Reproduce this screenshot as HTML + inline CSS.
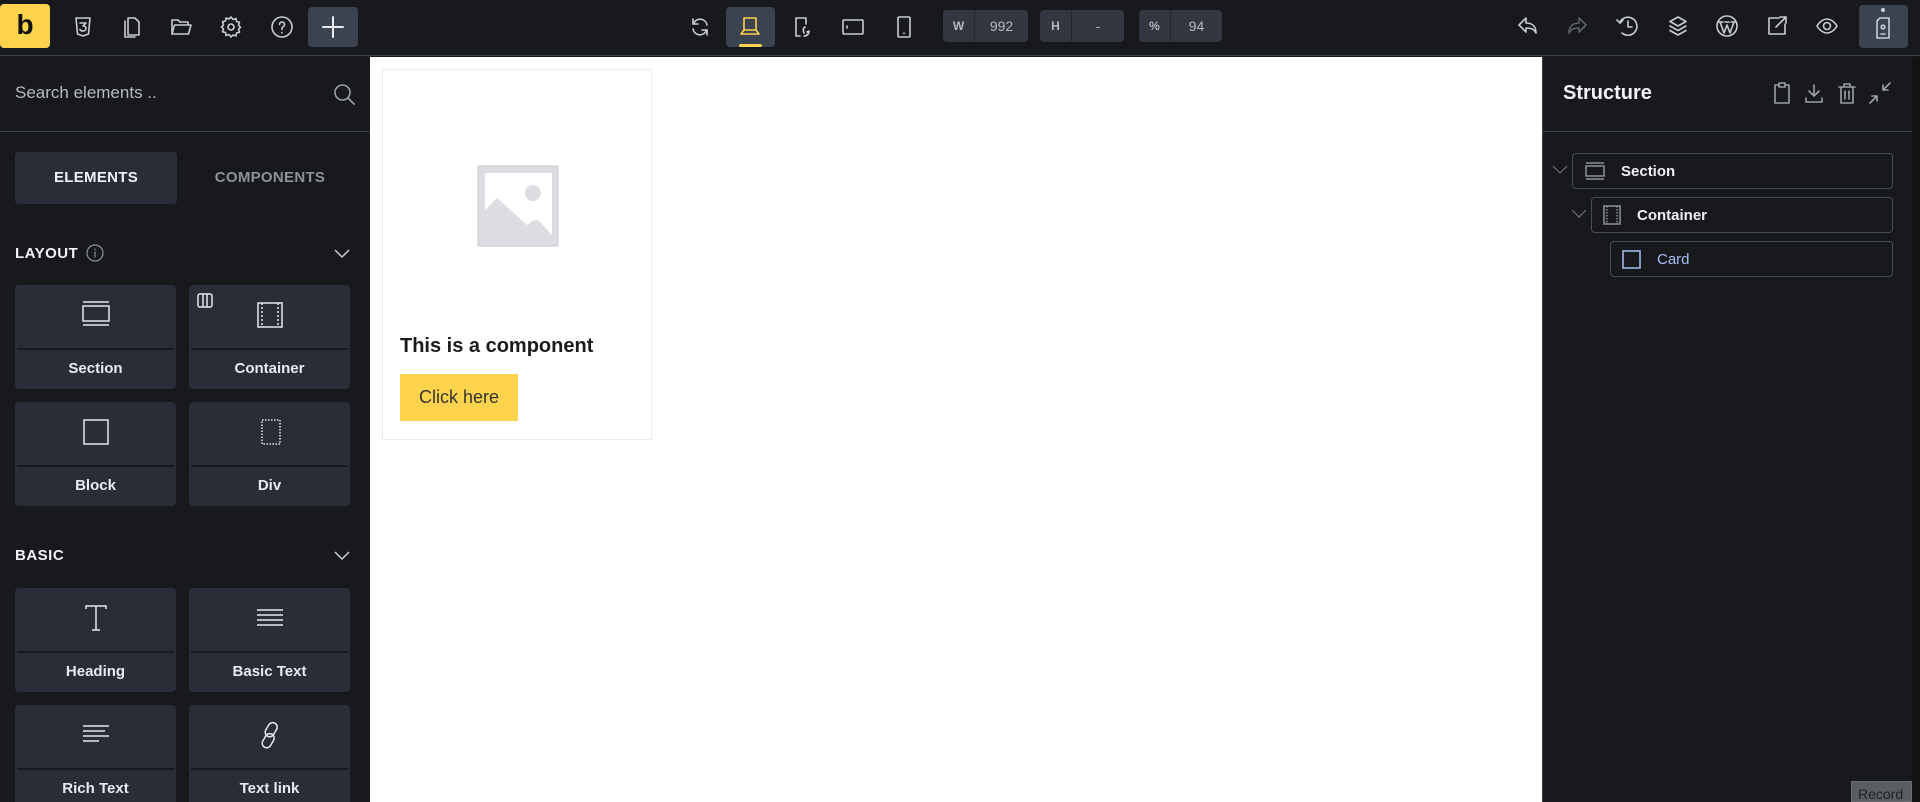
<!DOCTYPE html>
<html><head><meta charset="utf-8"><style>
*{box-sizing:border-box;margin:0;padding:0}
html,body{width:1920px;height:802px;overflow:hidden}
body{background:#17191c;font-family:"Liberation Sans",sans-serif;position:relative;color:#e6e8eb}
.abs{position:absolute}
svg{display:block}
.ic{position:absolute;stroke:#c9ccd1;fill:none;stroke-width:1.6;stroke-linecap:round;stroke-linejoin:round}
.top{left:0;top:0;width:1920px;height:56px;background:#17191c;border-bottom:1px solid #3a4048}
.box{position:absolute;top:10px;height:32px;background:#323741;border-radius:4px;font-size:14px;color:#b5b9c0;display:flex}
.box span{display:flex;align-items:center;justify-content:center}
.box .k{width:32px;border-right:1px solid #23272e;font-weight:bold;font-size:12px}
.left{left:0;top:57px;width:370px;height:745px;background:#17191c}
.card{position:absolute;width:161px;height:104px;background:#282d38;border-radius:4px}
.card .lbl{position:absolute;left:2px;right:2px;top:63px;height:41px;border-top:2px solid #17191c;text-align:center;line-height:38px;font-size:15px;font-weight:bold;color:#e8eaee}
.card svg{position:absolute;left:50%;transform:translateX(-50%);top:16px;stroke:#e6e8eb;fill:none;stroke-width:1.5}
.hd{position:absolute;left:15px;font-size:15px;font-weight:bold;letter-spacing:.5px;color:#f0f2f5}
.chev{position:absolute;stroke:#c9ccd1;fill:none;stroke-width:1.5}
.right{left:1542px;top:57px;width:370px;height:745px;background:#17191c;border-left:1px solid #3a4048}
.row{position:absolute;height:36px;border:1px solid #474c55;border-radius:4px;font-size:15px;font-weight:bold;display:flex;align-items:center;color:#eef0f3}
</style></head><body>
<div class="abs top"></div>
<div class="abs" style="left:0;top:4px;width:50px;height:44px;background:#fdd34d;border-radius:4px;color:#111;font-weight:bold;font-size:28px;text-align:center;line-height:42px">b</div>
<svg class="ic" style="left:71px;top:15px" width="24" height="24" viewBox="0 0 24 24"><path d="M5 3h14l-1.5 16L12 21l-5.5-2z"/><path d="M9 8h6l-3 3c2 0 3 1 3 2.5S13.5 16 12 16s-2.5-.5-3-1.5"/></svg>
<svg class="ic" style="left:120px;top:15px" width="24" height="24" viewBox="0 0 24 24"><path d="M8 3h7l4 4v13H8z"/><path d="M5 6v16h10"/></svg>
<svg class="ic" style="left:169px;top:15px" width="24" height="24" viewBox="0 0 24 24"><path d="M3 19V5h6l2 2h8v3"/><path d="M3 19l2.5-9H22l-2.5 9z"/></svg>
<svg class="ic" style="left:219px;top:15px" width="24" height="24" viewBox="0 0 24 24"><circle cx="12" cy="12" r="3"/><path d="M12 2l2 2.5 3-1 .5 3 3 .8-1 3 2 2-2 2 1 3-3 .7-.5 3-3-1L12 22l-2-2.5-3 1-.5-3-3-.7 1-3-2-2 2-2-1-3 3-.8.5-3 3 1z"/></svg>
<svg class="ic" style="left:270px;top:15px" width="24" height="24" viewBox="0 0 24 24"><circle cx="12" cy="12" r="10"/><path d="M9.5 9.5a2.5 2.5 0 1 1 3.5 2.3c-.7.4-1 1-1 1.7v1"/><path d="M12 17.5v.5"/></svg>
<div class="abs" style="left:308px;top:7px;width:50px;height:40px;background:#3b4250;border-radius:4px"></div>
<svg class="ic" style="left:321px;top:15px;stroke:#e8eaee;stroke-width:2" width="24" height="24" viewBox="0 0 24 24"><path d="M12 2v20M2 12h20"/></svg>
<svg class="ic" style="left:688px;top:15px" width="24" height="24" viewBox="0 0 24 24"><path d="M19 10a7 7 0 0 0-12.5-3L5 9M5 14a7 7 0 0 0 12.5 3L19 15"/><path d="M5 4v5h5M19 20v-5h-5"/></svg>
<div class="abs" style="left:726px;top:7px;width:49px;height:40px;background:#3b4250;border-radius:4px"></div>
<svg class="ic" style="left:738px;top:14px;stroke:#fdd34d" width="24" height="24" viewBox="0 0 24 24"><path d="M6 4h12v12H6zM3 20l3-4h12l3 4z"/></svg>
<div class="abs" style="left:739px;top:44px;width:23px;height:3px;background:#fdd34d;border-radius:2px"></div>
<svg class="ic" style="left:790px;top:15px" width="24" height="24" viewBox="0 0 24 24"><path d="M16 3H6v18h4M16 3v6"/><path d="M14 21c3 0 5-2 5-5l-2 1M15 12c-2 1-2 4-1 6"/></svg>
<svg class="ic" style="left:841px;top:15px" width="24" height="24" viewBox="0 0 24 24"><rect x="2" y="5" width="20" height="14" rx="1"/><path d="M6 11v2"/></svg>
<svg class="ic" style="left:892px;top:15px" width="24" height="24" viewBox="0 0 24 24"><rect x="6" y="2" width="12" height="20" rx="1"/><path d="M12 18v.5"/></svg>
<div class="box" style="left:943px;width:85px"><span class="k">W</span><span style="flex:1">992</span></div>
<div class="box" style="left:1040px;width:84px"><span class="k">H</span><span style="flex:1">-</span></div>
<div class="box" style="left:1139px;width:83px"><span class="k">%</span><span style="flex:1">94</span></div>
<svg class="ic" style="left:1516px;top:14px" width="24" height="24" viewBox="0 0 24 24"><path d="M10 4L3 11l7 7v-4c5 0 8 1 10 5 0-6-3-10-10-10z"/></svg>
<svg class="ic" style="left:1565px;top:14px;stroke:#5b6069" width="24" height="24" viewBox="0 0 24 24"><path d="M14 4l7 7-7 7v-4c-5 0-8 1-10 5 0-6 3-10 10-10z"/></svg>
<svg class="ic" style="left:1615px;top:14px" width="24" height="24" viewBox="0 0 24 24"><path d="M5 8a9 9 0 1 1 2 11"/><path d="M2 6l3 3 3-3M13 7v6h4"/></svg>
<svg class="ic" style="left:1666px;top:14px" width="24" height="24" viewBox="0 0 24 24"><path d="M12 3l8 4.5-8 4.5-8-4.5z"/><path d="M4 12l8 4.5 8-4.5M4 16.5l8 4.5 8-4.5"/></svg>
<svg class="ic" style="left:1715px;top:14px" width="24" height="24" viewBox="0 0 24 24"><circle cx="12" cy="12" r="10"/><path d="M5 8l4 11 3-8 3 8 4-11M4 8h4M10 8h4M16 8h4"/></svg>
<svg class="ic" style="left:1765px;top:14px" width="24" height="24" viewBox="0 0 24 24"><path d="M14 4H4v16h16V10"/><path d="M11 13L21 3M15 3h6v6"/></svg>
<svg class="ic" style="left:1815px;top:14px" width="24" height="24" viewBox="0 0 24 24"><path d="M2 12c3-5 7-7 10-7s7 2 10 7c-3 5-7 7-10 7s-7-2-10-7z"/><circle cx="12" cy="12" r="3.5"/></svg>
<div class="abs" style="left:1859px;top:5px;width:49px;height:43px;background:#3b4250;border-radius:4px"></div>
<svg class="ic" style="left:1871px;top:6px" width="24" height="40" viewBox="0 0 24 40"><circle cx="12" cy="4" r="1.3" fill="#c9ccd1"/><path d="M9 12h9v20H6V15z"/><circle cx="12" cy="21" r="1.8"/><path d="M10 28h4"/></svg>

<div class="abs left"></div>
<div class="abs" style="left:15px;top:83px;font-size:17px;color:#b6bac1">Search elements ..</div>
<svg class="ic" style="left:332px;top:82px;stroke:#9ca0a7" width="24" height="24" viewBox="0 0 24 24"><circle cx="10.5" cy="10.5" r="7.5"/><path d="M16 16l6 6"/></svg>
<div class="abs" style="left:0;top:131px;width:370px;height:1px;background:#3a4048"></div>
<div class="abs" style="left:15px;top:152px;width:162px;height:52px;background:#282d38;border-radius:4px;text-align:center;line-height:52px;font-size:15px;font-weight:bold;color:#f0f2f5;letter-spacing:.3px">ELEMENTS</div>
<div class="abs" style="left:189px;top:152px;width:162px;height:52px;text-align:center;line-height:52px;font-size:15px;font-weight:bold;color:#8d9199;letter-spacing:.3px">COMPONENTS</div>
<div class="hd" style="top:245px">LAYOUT</div>
<svg class="ic" style="left:86px;top:244px;stroke:#8d9199;stroke-width:1.2" width="18" height="18" viewBox="0 0 18 18"><circle cx="9" cy="9" r="8"/><path d="M9 8v5M9 5v.5"/></svg>
<svg class="chev" style="left:333px;top:248px" width="18" height="12" viewBox="0 0 18 12"><path d="M2 2l7 7 7-7"/></svg>
<div class="card" style="left:15px;top:285px"><svg width="28" height="26" viewBox="0 0 28 26"><path d="M1 1h26M1 24h26M1 5h26v15H1z"/></svg><div class="lbl">Section</div></div>
<div class="card" style="left:189px;top:285px"><svg width="28" height="28" viewBox="0 0 28 28"><rect x="2" y="2" width="24" height="24"/><path d="M6 2v24M22 2v24" stroke-dasharray="2 2"/></svg><svg style="left:8px;top:8px;transform:none" width="16" height="16" viewBox="0 0 16 16"><rect x="1" y="1" width="14" height="13" rx="2"/><path d="M6 1v13M10 1v13"/></svg><div class="lbl">Container</div></div>
<div class="card" style="left:15px;top:402px"><svg width="28" height="28" viewBox="0 0 28 28"><rect x="2" y="2" width="24" height="24"/></svg><div class="lbl">Block</div></div>
<div class="card" style="left:189px;top:402px"><svg width="28" height="28" viewBox="0 0 28 28"><rect x="6" y="2" width="18" height="24" stroke-dasharray="1.5 1.5"/></svg><div class="lbl">Div</div></div>
<div class="hd" style="top:547px">BASIC</div>
<svg class="chev" style="left:333px;top:550px" width="18" height="12" viewBox="0 0 18 12"><path d="M2 2l7 7 7-7"/></svg>
<div class="card" style="left:15px;top:588px"><svg width="28" height="28" viewBox="0 0 28 28"><path d="M4 5V2h20v3M14 2v24M10 26h8"/></svg><div class="lbl">Heading</div></div>
<div class="card" style="left:189px;top:588px"><svg width="28" height="28" viewBox="0 0 28 28"><path d="M1 6h26M1 11h26M1 16h26M1 21h26"/></svg><div class="lbl">Basic Text</div></div>
<div class="card" style="left:15px;top:705px"><svg width="28" height="28" viewBox="0 0 28 28"><path d="M1 5h26M1 10h22M1 15h26M1 20h16"/></svg><div class="lbl">Rich Text</div></div>
<div class="card" style="left:189px;top:705px"><svg width="28" height="28" viewBox="0 0 28 28"><rect x="11" y="1" width="9" height="15" rx="4.5" transform="rotate(30 15 8)"/><rect x="8" y="12" width="9" height="15" rx="4.5" transform="rotate(30 12 19)"/></svg><div class="lbl">Text link</div></div>

<div class="abs" style="left:370px;top:57px;width:1172px;height:745px;background:#fff"></div>
<div class="abs" style="left:382px;top:69px;width:270px;height:371px;border:1px solid #ececec;background:#fff"></div>
<svg class="abs" style="left:476px;top:164px" width="84" height="84" viewBox="0 0 84 84"><rect x="2" y="2" width="80" height="80" fill="#dcdde0" stroke="#c8c9cc"/><path d="M9 9h67v62L64 58c-5-5-9 1-13 3L21 34 9 46z" fill="#fff"/><circle cx="57" cy="29" r="8" fill="#dcdde0"/></svg>
<div class="abs" style="left:400px;top:335px;font-size:20px;font-weight:bold;color:#1b1b1f">This is a component</div>
<div class="abs" style="left:400px;top:374px;width:118px;height:47px;background:#fdd34d;font-size:18px;color:#333;text-align:center;line-height:47px">Click here</div>

<div class="abs right"></div>
<div class="abs" style="left:1563px;top:82px;font-size:20px;font-weight:bold;color:#f0f2f5">Structure</div>
<svg class="ic" style="left:1772px;top:82px;stroke:#9ca0a7" width="20" height="22" viewBox="0 0 20 22"><path d="M7 3H3v18h14V3h-4M7 1h6v4H7z"/></svg>
<svg class="ic" style="left:1804px;top:82px;stroke:#9ca0a7" width="20" height="22" viewBox="0 0 20 22"><path d="M10 3v11M5 9l5 5 5-5M2 16v4h16v-4"/></svg>
<svg class="ic" style="left:1837px;top:82px;stroke:#9ca0a7" width="20" height="22" viewBox="0 0 20 22"><path d="M2 5h16M7 5V2h6v3M4 5v16h12V5M8 9v8M12 9v8"/></svg>
<svg class="ic" style="left:1869px;top:82px;stroke:#9ca0a7" width="22" height="22" viewBox="0 0 22 22"><path d="M21 1l-7 7M14 3v5h5M1 21l7-7M8 19v-5H3"/></svg>
<div class="abs" style="left:1542px;top:131px;width:370px;height:1px;background:#3a4048"></div>
<svg class="chev" style="left:1552px;top:165px;stroke:#6d7179;stroke-width:1.2" width="16" height="10" viewBox="0 0 16 10"><path d="M1 1l7 7 7-7"/></svg>
<div class="row" style="left:1572px;top:153px;width:321px"><svg style="margin-left:12px;margin-right:16px;stroke:#8d9199;fill:none;stroke-width:1.5" width="20" height="18" viewBox="0 0 20 18"><path d="M1 1h18M1 17h18M1 4h18v10H1z"/></svg>Section</div>
<svg class="chev" style="left:1571px;top:209px;stroke:#6d7179;stroke-width:1.2" width="16" height="10" viewBox="0 0 16 10"><path d="M1 1l7 7 7-7"/></svg>
<div class="row" style="left:1591px;top:197px;width:302px"><svg style="margin-left:11px;margin-right:16px;stroke:#8d9199;fill:none;stroke-width:1.5" width="18" height="20" viewBox="0 0 18 20"><rect x="1" y="1" width="16" height="18"/><path d="M4 1v18M14 1v18" stroke-dasharray="1.5 1.5"/></svg>Container</div>
<div class="row" style="left:1610px;top:241px;width:283px;color:#a8c1f5;font-weight:normal"><svg style="margin-left:11px;margin-right:16px;stroke:#a8c1f5;fill:none;stroke-width:1.5" width="19" height="19" viewBox="0 0 19 19"><rect x="1" y="1" width="17" height="17"/></svg>Card</div>
<div class="abs" style="left:1912px;top:57px;width:8px;height:745px;background:#111315"></div>
<div class="abs" style="left:1851px;top:781px;width:61px;height:21px;background:#5a5e62;border:1px solid #6a6e72;color:#222;font-size:14px;padding-left:6px;line-height:24px">Record</div>
</body></html>
